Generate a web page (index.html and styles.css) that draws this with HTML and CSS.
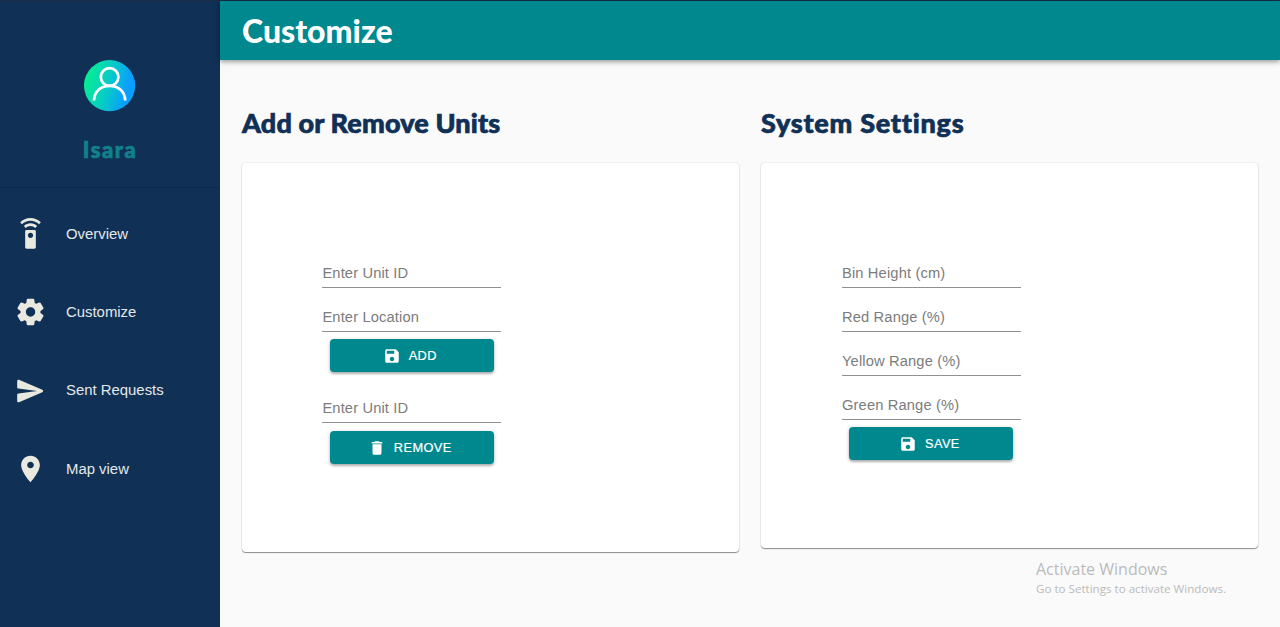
FILE: index.html
```html
<!DOCTYPE html>
<html lang="en">
<head>
<meta charset="utf-8">
<title>Customize</title>
<link rel="stylesheet" href="styles.css">
</head>
<body>
<svg class="defs" aria-hidden="true">
  <symbol id="save" viewBox="0 0 24 24"><path d="M17 3H5c-1.110 0-2 .9-2 2v14c0 1.100.890 2 2 2h14c1.100 0 2-.9 2-2V7l-4-4zm-5 16c-1.660 0-3-1.340-3-3s1.340-3 3-3 3 1.340 3 3-1.340 3-3 3zm3-10H5V5h10v4z"/></symbol>
  <symbol id="trash" viewBox="0 0 24 24"><path d="M6 19c0 1.1.9 2 2 2h8c1.1 0 2-.9 2-2V7H6v12zM19 4h-3.5l-1-1h-5l-1 1H5v2h14V4z"/></symbol>
</svg>
<div class="app">
  <aside class="sidebar">
    <div class="profile">
      <svg class="avatar" viewBox="0 0 52 52">
        <defs><linearGradient id="g" x1="0" y1=".35" x2="1" y2=".6"><stop offset="0" stop-color="#08f08f"/><stop offset=".5" stop-color="#06c8cb"/><stop offset=".85" stop-color="#0a9ffc"/></linearGradient></defs>
        <circle cx="25.600" cy="25.600" r="25.600" fill="url(#g)"/>
        <g fill="none" stroke="#fff" stroke-width="2.7"><circle cx="25.600" cy="17" r="8.8"/><path d="M9.900 40.500C10.600 31 17.100 25.800 25.600 25.800s15 5.200 15.700 14.700"/></g>
      </svg>
      <div class="name">Isara</div>
    </div>
    <nav class="menu">
      <a class="item"><svg class="icon" viewBox="0 0 24 24"><path d="M15 9H9c-.55 0-1 .45-1 1v12c0 .55.45 1 1 1h6c.55 0 1-.45 1-1V10c0-.55-.45-1-1-1zm-3 6c-1.100 0-2-.9-2-2s.9-2 2-2 2 .9 2 2-.9 2-2 2zM7.050 6.050l1.410 1.410C9.370 6.560 10.620 6 12 6s2.630.56 3.540 1.460l1.410-1.410C15.680 4.780 13.930 4 12 4s-3.680.78-4.950 2.050zM12 0C8.960 0 6.210 1.230 4.220 3.220l1.410 1.410C7.260 3.010 9.510 2 12 2s4.740 1.010 6.360 2.640l1.410-1.410C17.790 1.230 15.040 0 12 0z"/></svg><span>Overview</span></a>
      <a class="item"><svg class="icon" viewBox="0 0 24 24"><path d="M19.5 12c0-.23-.01-.45-.03-.68l1.860-1.410c.4-.3.510-.860.260-1.300l-1.870-3.230c-.25-.44-.790-.620-1.250-.420l-2.150.910c-.370-.260-.760-.490-1.170-.680l-.290-2.310C14.800 2.380 14.370 2 13.870 2h-3.730c-.510 0-.940.380-1 .880l-.290 2.310c-.410.190-.8.420-1.170.680l-2.150-.910c-.460-.2-1-.02-1.250.420L2.410 8.620c-.25.440-.140.990.260 1.300l1.860 1.410c-.020.220-.030.440-.030.670s.010.450.030.680l-1.860 1.410c-.4.3-.510.860-.260 1.300l1.870 3.230c.25.440.790.620 1.250.420l2.150-.910c.370.260.760.490 1.170.680l.290 2.310c.060.5.490.880.990.880h3.730c.5 0 .930-.380.990-.880l.290-2.310c.410-.190.8-.420 1.170-.680l2.150.910c.460.2 1 .02 1.250-.420l1.870-3.230c.25-.440.140-.990-.260-1.300l-1.860-1.410c.030-.230.040-.450.040-.680zm-7.460 3.500c-1.930 0-3.500-1.570-3.500-3.500s1.570-3.500 3.500-3.500 3.500 1.570 3.500 3.500-1.570 3.500-3.500 3.500z"/></svg><span>Customize</span></a>
      <a class="item"><svg class="icon" viewBox="0 0 24 24"><path d="M3.400 20.400l17.450-7.480c.81-.35.81-1.490 0-1.840L3.400 3.600c-.66-.29-1.390.2-1.390.91L2 9.120c0 .5.370.93.870.99L17 12 2.870 13.880c-.5.070-.87.5-.87 1l.010 4.610c0 .71.730 1.200 1.390.91z"/></svg><span>Sent Requests</span></a>
      <a class="item"><svg class="icon" viewBox="0 0 24 24"><path d="M12 2C8.130 2 5 5.130 5 9c0 5.250 7 13 7 13s7-7.750 7-13c0-3.870-3.130-7-7-7zm0 9.500c-1.380 0-2.500-1.120-2.500-2.500s1.120-2.500 2.500-2.500 2.500 1.120 2.500 2.500-1.120 2.500-2.500 2.500z"/></svg><span>Map view</span></a>
    </nav>
  </aside>
  <main class="main">
    <header class="bar"><h1>Customize</h1></header>
    <div class="columns">
      <section>
        <h2 class="title title-units">Add or Remove Units</h2>
        <div class="card card-units">
          <input class="field" placeholder="Enter Unit ID">
          <input class="field" placeholder="Enter Location">
          <button class="btn"><svg viewBox="0 0 24 24"><use href="#save"/></svg>ADD</button>
          <div class="group">
            <input class="field" placeholder="Enter Unit ID">
            <button class="btn"><svg viewBox="0 0 24 24"><use href="#trash"/></svg>REMOVE</button>
          </div>
        </div>
      </section>
      <section>
        <h2 class="title title-settings">System Settings</h2>
        <div class="card card-settings">
          <input class="field" placeholder="Bin Height (cm)">
          <input class="field" placeholder="Red Range (%)">
          <input class="field" placeholder="Yellow Range (%)">
          <input class="field" placeholder="Green Range (%)">
          <button class="btn"><svg viewBox="0 0 24 24"><use href="#save"/></svg>SAVE</button>
        </div>
      </section>
    </div>
  </main>
  <div class="watermark"><div class="wm-title">Activate Windows</div><div class="wm-text">Go to Settings to activate Windows.</div></div>
</div>
</body>
</html>
```

FILE: styles.css
```css
* { box-sizing: border-box; }
body { margin: 0; background: #fafafa; font-family: "Liberation Sans", Arial, sans-serif; overflow: hidden; }
.defs { display: none; }
.app { position: relative; display: flex; height: 627px; border-top: 1px solid #1c2c45; }
.sidebar { width: 220px; background: #103056; flex: none; }
.profile { height: 187px; padding: 59px 0 0; display: flex; flex-direction: column; align-items: center; border-bottom: 1px solid #0e2a4c; }
.avatar { width: 52px; height: 52px; display: block; }
.name { margin-top: 23px; font: 900 22px/30px Lato, sans-serif; color: #10808b; letter-spacing: 1.5px; -webkit-text-stroke: .7px #10808b; }
.menu { padding-top: 7px; }
.item { display: flex; align-items: center; height: 78.33px; padding-left: 14px; gap: 19px; color: #e3e8e8; font-size: 14.9px; }
.item span { margin-top: -1px; }
.icon { width: 33px; height: 32px; fill: #eae9e0; }
.main { flex: 1; }
.bar { height: 59px; background: #00888f; box-shadow: 0 2px 4px rgba(0,0,0,.28), 0 1px 8px rgba(0,0,0,.14); padding-left: 22px; }
h1 { margin: 0; font: 900 32px/59px Lato, sans-serif; color: #fff; }
.columns { display: grid; grid-template-columns: 497px 497px; column-gap: 22px; padding: 44px 22px 0; }
.title { margin: 0 0 22px; font: 900 27px/37px Lato, sans-serif; color: #103056; white-space: nowrap; font-variant-ligatures: none; -webkit-text-stroke: .7px #103056; }
.title-units { letter-spacing: .15px; }
.title-settings { letter-spacing: .75px; }
.card { background: #fff; border-radius: 4px; box-shadow: 0 1px 1px rgba(0,0,0,.42), 0 0 2px rgba(0,0,0,.14); padding: 95px 0 0 81px; }
.card-units { height: 389px; padding-left: 80.4px; }
.card-settings { height: 385px; }
.field { display: block; width: 179px; height: 30px; margin: 0 0 14px; padding: 0; border: 0; border-bottom: 1px solid #919191; border-radius: 0; background: none; font: 14.7px "Liberation Sans", Arial, sans-serif; letter-spacing: .14px; }
.field::placeholder { color: #7c7c7c; opacity: 1; }
.btn { display: flex; align-items: center; justify-content: center; gap: 7.5px; width: 164px; height: 33px; margin: -7px 0 0 7.4px; padding: 0 3.5px 0 0; border: 0; border-radius: 4px; background: #00888f; color: #fff; font: 12.8px "Liberation Sans", Arial, sans-serif; letter-spacing: .4px; -webkit-text-stroke: .2px #fff; box-shadow: 0 2px 2px rgba(0,0,0,.2), 0 1px 4px rgba(0,0,0,.2); }
.btn svg { width: 18px; height: 18px; fill: #fff; }
.group { margin-top: 21px; }
.group .btn { margin-top: -6px; }
.watermark { position: absolute; left: 1036px; top: 557px; font-family: "Open Sans", sans-serif; color: #bababa; white-space: nowrap; }
.wm-title { font-size: 16px; line-height: 22px; }
.wm-text { font-size: 11.6px; line-height: 17px; }
```
